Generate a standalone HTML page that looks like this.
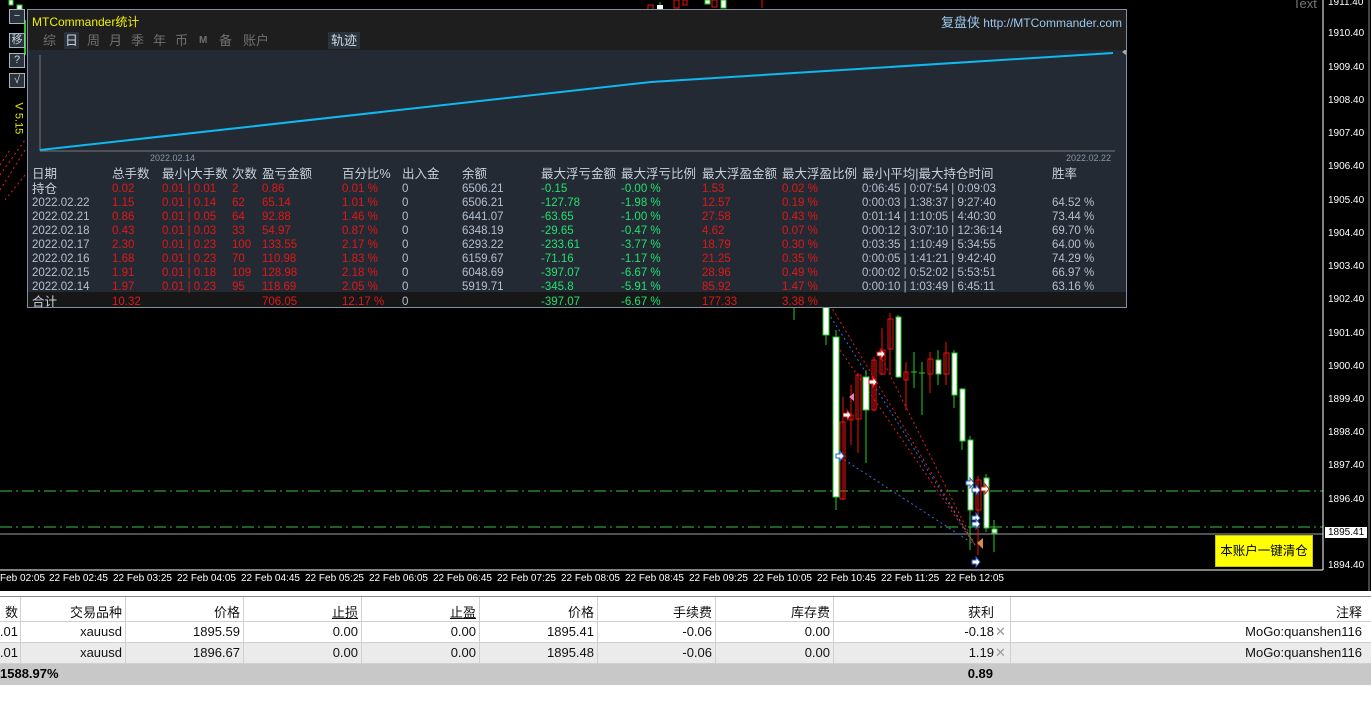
<!DOCTYPE html>
<html><head><meta charset="utf-8"><style>
*{margin:0;padding:0;box-sizing:border-box}
body{width:1371px;height:720px;overflow:hidden;background:#fff;font-family:"Liberation Sans","Noto Sans CJK SC",sans-serif;position:relative}
.abs{position:absolute;white-space:nowrap}
#chart{position:absolute;left:0;top:0;width:1371px;height:591px;background:#000}
.pl{position:absolute;left:1328px;font-size:10px;color:#fff;font-family:"Liberation Sans",sans-serif}
.tl{position:absolute;top:573px;font-size:10px;color:#fff}
.btn{position:absolute;left:9px;width:16px;height:15px;border:1px solid #a8b4c4;background:#2a323c;color:#c8d0dc;font-size:11px;text-align:center;line-height:13px}
#panel{position:absolute;left:27px;top:9px;width:1100px;height:299px;border:1px solid #7f8fa4;background:#232a33;overflow:hidden}
.r{position:absolute;font-size:11.5px;white-space:nowrap;line-height:14px}
.h{color:#c8d0dc;font-size:12.5px}
.w{color:#b4c0d0}.rd{color:#e01818}.g{color:#22e070}
.tab{position:absolute;top:22px;font-size:13px;color:#707070;line-height:17px}
#tbl{position:absolute;left:0;top:596px;width:1371px}
.row{position:absolute;left:0;width:1371px;font-size:13px;color:#111}
.c{position:absolute;text-align:right;white-space:nowrap}
.vl{position:absolute;width:1px;background:#d0d0d0}
</style></head><body>
<div id="chart">
<svg width="1371" height="591" style="position:absolute;left:0;top:0">
<line x1="0" y1="491" x2="1323" y2="491" stroke="#3bbf3b" stroke-dasharray="12,4,2,4"/>
<line x1="0" y1="527" x2="1323" y2="527" stroke="#3bbf3b" stroke-dasharray="12,4,2,4"/>
<line x1="0" y1="534" x2="1323" y2="534" stroke="#9aa0a8"/>
<line x1="1323" y1="0" x2="1323" y2="570" stroke="#fff"/>
<line x1="0" y1="570" x2="1323" y2="570" stroke="#fff"/>
<line x1="1369" y1="0" x2="1369" y2="591" stroke="#888"/>
<g stroke-dasharray="2,3" fill="none">
<line x1="830" y1="305" x2="975" y2="545" stroke="#e02020"/>
<line x1="840" y1="350" x2="975" y2="545" stroke="#e02020"/>
<line x1="880" y1="355" x2="975" y2="545" stroke="#e02020"/>
<line x1="820" y1="300" x2="975" y2="545" stroke="#3a6ae0"/>
<line x1="840" y1="457" x2="975" y2="545" stroke="#3a6ae0"/>
<line x1="0" y1="190" x2="25" y2="150" stroke="#e02020"/>
<line x1="0" y1="175" x2="25" y2="140" stroke="#e02020"/>
<line x1="5" y1="200" x2="25" y2="175" stroke="#e02020"/>
<line x1="0" y1="165" x2="10" y2="150" stroke="#e02020"/>
</g>
<g stroke-width="1">
<line x1="794" y1="305" x2="794" y2="320" stroke="#2c2"/>
<line x1="836" y1="330" x2="836" y2="510" stroke="#2c2"/><rect x="833" y="337" width="6" height="160" fill="#fff" stroke="#2c2"/>
<line x1="826" y1="305" x2="826" y2="345" stroke="#2c2"/><rect x="823" y="305" width="6" height="30" fill="#fff" stroke="#2c2"/>
<line x1="843" y1="397" x2="843" y2="500" stroke="#e11"/><rect x="840" y="422" width="5" height="77" fill="none" stroke="#e11"/>
<line x1="851" y1="385" x2="851" y2="445" stroke="#e11"/><rect x="849" y="415" width="4" height="5" fill="none" stroke="#e11"/>
<line x1="858" y1="373" x2="858" y2="453" stroke="#e11"/><rect x="856" y="375" width="5" height="44" fill="none" stroke="#e11"/>
<line x1="866" y1="370" x2="866" y2="463" stroke="#2c2"/><rect x="863" y="377" width="6" height="33" fill="#fff" stroke="#2c2"/>
<line x1="874" y1="357" x2="874" y2="411" stroke="#e11"/><rect x="872" y="360" width="4" height="50" fill="none" stroke="#e11"/>
<line x1="882" y1="328" x2="882" y2="375" stroke="#e11"/><rect x="880" y="350" width="5" height="24" fill="none" stroke="#e11"/>
<line x1="890" y1="313" x2="890" y2="375" stroke="#e11"/><rect x="888" y="319" width="5" height="30" fill="none" stroke="#e11"/>
<line x1="898" y1="315" x2="898" y2="378" stroke="#2c2"/><rect x="896" y="317" width="5" height="60" fill="#fff" stroke="#2c2"/>
<line x1="906" y1="362" x2="906" y2="410" stroke="#e11"/><rect x="904" y="372" width="4" height="8" fill="none" stroke="#e11"/>
<line x1="914" y1="352" x2="914" y2="388" stroke="#2c2"/><line x1="911" y1="372" x2="917" y2="372" stroke="#2c2"/>
<line x1="922" y1="362" x2="922" y2="415" stroke="#2c2"/><line x1="919" y1="373" x2="925" y2="373" stroke="#2c2"/>
<line x1="930" y1="352" x2="930" y2="393" stroke="#e11"/><rect x="928" y="359" width="5" height="15" fill="none" stroke="#e11"/>
<line x1="938" y1="350" x2="938" y2="385" stroke="#2c2"/><rect x="936" y="360" width="5" height="14" fill="#fff" stroke="#2c2"/>
<line x1="946" y1="342" x2="946" y2="385" stroke="#e11"/><rect x="944" y="353" width="5" height="21" fill="none" stroke="#e11"/>
<line x1="954" y1="350" x2="954" y2="408" stroke="#2c2"/><rect x="952" y="353" width="5" height="42" fill="#fff" stroke="#2c2"/>
<line x1="962" y1="388" x2="962" y2="450" stroke="#2c2"/><rect x="960" y="389" width="5" height="52" fill="#fff" stroke="#2c2"/>
<line x1="970" y1="436" x2="970" y2="550" stroke="#2c2"/><rect x="968" y="440" width="5" height="70" fill="#fff" stroke="#2c2"/>
<line x1="978" y1="476" x2="978" y2="555" stroke="#e11"/><rect x="976" y="480" width="5" height="30" fill="none" stroke="#e11"/>
<line x1="986" y1="474" x2="986" y2="532" stroke="#2c2"/><rect x="984" y="478" width="5" height="50" fill="#fff" stroke="#2c2"/>
<line x1="994" y1="520" x2="994" y2="552" stroke="#2c2"/><rect x="992" y="529" width="5" height="4" fill="#fff" stroke="#2c2"/>
<rect x="648" y="5" width="5" height="5" fill="none" stroke="#e11"/>
<line x1="660" y1="2" x2="660" y2="10" stroke="#2c2"/><rect x="657" y="5" width="6" height="4" fill="#fff"/>
<rect x="674" y="0" width="5" height="8" fill="none" stroke="#e11"/>
<rect x="683" y="0" width="4" height="5" fill="none" stroke="#e11"/>
<rect x="705" y="0" width="5" height="4" fill="#fff" stroke="#2c2"/>
<rect x="712" y="0" width="5" height="7" fill="none" stroke="#e11"/>
<rect x="721" y="0" width="5" height="8" fill="#fff" stroke="#2c2"/>
<line x1="762" y1="0" x2="762" y2="8" stroke="#e11"/>
<rect x="9" y="0" width="4" height="5" fill="#fff" stroke="#2c2"/>
<rect x="17" y="5" width="5" height="5" fill="#fff" stroke="#2c2"/>
<line x1="25" y1="20" x2="25" y2="55" stroke="#2c2" stroke-width="2"/>
<g fill="#fff" stroke="#2a5ad0"><path d="M836 454h4v-3l4 5-4 5v-3h-4z"/><path d="M966 481h4v-3l4 5-4 5v-3h-4z"/><path d="M972 488h4v-3l4 5-4 5v-3h-4z"/><path d="M972 516h4v-3l4 5-4 5v-3h-4z"/><path d="M972 522h4v-3l4 5-4 5v-3h-4z"/><path d="M972 560h4v-3l4 5-4 5v-3h-4z"/></g>
<g fill="#fff" stroke="#d01010"><path d="M843 413h4v-3l4 5-4 5v-3h-4z"/><path d="M869 380h4v-3l4 5-4 5v-3h-4z"/><path d="M877 352h4v-3l4 5-4 5v-3h-4z"/><path d="M981 487h4v-3l4 5-4 5v-3h-4z"/></g>
<path d="M854 393l-5 4 5 4z" fill="#e080c0"/><path d="M983 538l-6 5 6 6z" fill="#d09040"/>
</g>
</svg>
<div class="btn" style="top:9px">−</div>
<div class="btn" style="top:33px">移</div>
<div class="btn" style="top:53px">?</div>
<div class="btn" style="top:73px">√</div>
<div class="abs" style="left:1px;top:113px;width:34px;height:13px;line-height:13px;transform:rotate(90deg);font-size:11px;color:#e8e800">V 5.15</div>
<div class="abs" style="left:1293px;top:-4px;font-size:13px;color:#777">Text</div>
<div class="pl" style="top:-3px">1911.40</div><div class="pl" style="top:28px">1910.40</div><div class="pl" style="top:62px">1909.40</div><div class="pl" style="top:95px">1908.40</div><div class="pl" style="top:128px">1907.40</div><div class="pl" style="top:161px">1906.40</div><div class="pl" style="top:195px">1905.40</div><div class="pl" style="top:228px">1904.40</div><div class="pl" style="top:261px">1903.40</div><div class="pl" style="top:294px">1902.40</div><div class="pl" style="top:328px">1901.40</div><div class="pl" style="top:361px">1900.40</div><div class="pl" style="top:394px">1899.40</div><div class="pl" style="top:427px">1898.40</div><div class="pl" style="top:460px">1897.40</div><div class="pl" style="top:494px">1896.40</div>
<div class="pl" style="top:527px;left:1325px;background:#fff;color:#000;padding:0 3px;">1895.41</div>
<div class="pl" style="top:560px">1894.40</div>
<div class="abs" style="left:1215px;top:535px;width:98px;height:32px;background:#ffff00;border:1px solid #c8c800;font-size:12.5px;line-height:31px;text-align:center;color:#000">本账户一键清仓</div>
<div class="tl" style="left:0">Feb 02:05</div><div class="tl" style="left:49px">22 Feb 02:45</div><div class="tl" style="left:113px">22 Feb 03:25</div><div class="tl" style="left:177px">22 Feb 04:05</div><div class="tl" style="left:241px">22 Feb 04:45</div><div class="tl" style="left:305px">22 Feb 05:25</div><div class="tl" style="left:369px">22 Feb 06:05</div><div class="tl" style="left:433px">22 Feb 06:45</div><div class="tl" style="left:497px">22 Feb 07:25</div><div class="tl" style="left:561px">22 Feb 08:05</div><div class="tl" style="left:625px">22 Feb 08:45</div><div class="tl" style="left:689px">22 Feb 09:25</div><div class="tl" style="left:753px">22 Feb 10:05</div><div class="tl" style="left:817px">22 Feb 10:45</div><div class="tl" style="left:881px">22 Feb 11:25</div><div class="tl" style="left:945px">22 Feb 12:05</div>
</div>

<div id="panel">
<div class="abs" style="left:0;top:0;width:1098px;height:40px;background:#1e1e1e"></div>
<div class="abs" style="left:4px;top:3px;font-size:12px;color:#f0f000">MTCommander统计</div>
<div class="abs" style="right:4px;top:2px;font-size:12px;color:#9cc8f0"><span style="font-size:13px">复盘侠</span> http://MTCommander.com</div>
<div class="tab" style="left:15px">综</div>
<div class="tab" style="left:36px;background:#2a323c;color:#c8d0dc;padding:0 1px">日</div>
<div class="tab" style="left:59px">周</div><div class="tab" style="left:81px">月</div><div class="tab" style="left:103px">季</div><div class="tab" style="left:125px">年</div><div class="tab" style="left:147px">币</div>
<div class="tab" style="left:171px;font-size:10px;font-weight:bold">M</div>
<div class="tab" style="left:191px">备</div><div class="tab" style="left:215px">账户</div>
<div class="tab" style="left:300px;color:#d0d8e0;background:#2a323c;padding:0 3px">轨迹</div>
<svg width="1100" height="125" style="position:absolute;left:0;top:40px">
<line x1="12" y1="5" x2="12" y2="101" stroke="#777"/><line x1="12" y1="101" x2="1087" y2="101" stroke="#777"/>
<polyline points="12,100 623,32 1085,3" fill="none" stroke="#10b8f0" stroke-width="2"/>
<path d="M1098 -1l-4 3 4 3z" fill="#aaa"/>
</svg>
<div class="abs" style="left:122px;top:143px;font-size:9px;color:#8898a8">2022.02.14</div>
<div class="abs" style="left:1038px;top:143px;font-size:9px;color:#8898a8">2022.02.22</div>
<div class="abs" style="left:0;top:282px;width:1098px;height:18px;background:#171717"></div>
<div id="hdr"></div>
<div id="rows"></div>
</div>

<div id="tbl">
<div class="abs" style="left:0;top:0;width:1371px;height:1px;background:#888"></div>
<div class="row" style="top:1px;height:25px;border-bottom:1px solid #d0d0d0;background:#fff"></div>
<div class="row" style="top:26px;height:21px;border-bottom:1px solid #d0d0d0;background:#fff"></div>
<div class="row" style="top:47px;height:21px;border-bottom:1px solid #d0d0d0;background:#ebebeb"></div>
<div class="row" style="top:68px;height:21px;background:#c8c8c8"></div>
</div>
<script>
var xs=[4,84,134,204,234,314,374,434,513,593,674,754,834,1024];
var hd=["日期","总手数","最小|大手数","次数","盈亏金额","百分比%","出入金","余额","最大浮亏金额","最大浮亏比例","最大浮盈金额","最大浮盈比例","最小|平均|最大持仓时间","胜率"];
var hh="";hd.forEach(function(v,j){hh+='<div class="r h" style="left:'+xs[j]+'px;top:157px">'+v+'</div>';});
document.getElementById('hdr').innerHTML=hh;
var rows=[["持仓","0.02","0.01 | 0.01","2","0.86","0.01 %","0","6506.21","-0.15","-0.00 %","1.53","0.02 %","0:06:45 | 0:07:54 | 0:09:03",""],
["2022.02.22","1.15","0.01 | 0.14","62","65.14","1.01 %","0","6506.21","-127.78","-1.98 %","12.57","0.19 %","0:00:03 | 1:38:37 | 9:27:40","64.52 %"],
["2022.02.21","0.86","0.01 | 0.05","64","92.88","1.46 %","0","6441.07","-63.65","-1.00 %","27.58","0.43 %","0:01:14 | 1:10:05 | 4:40:30","73.44 %"],
["2022.02.18","0.43","0.01 | 0.03","33","54.97","0.87 %","0","6348.19","-29.65","-0.47 %","4.62","0.07 %","0:00:12 | 3:07:10 | 12:36:14","69.70 %"],
["2022.02.17","2.30","0.01 | 0.23","100","133.55","2.17 %","0","6293.22","-233.61","-3.77 %","18.79","0.30 %","0:03:35 | 1:10:49 | 5:34:55","64.00 %"],
["2022.02.16","1.68","0.01 | 0.23","70","110.98","1.83 %","0","6159.67","-71.16","-1.17 %","21.25","0.35 %","0:00:05 | 1:41:21 | 9:42:40","74.29 %"],
["2022.02.15","1.91","0.01 | 0.18","109","128.98","2.18 %","0","6048.69","-397.07","-6.67 %","28.96","0.49 %","0:00:02 | 0:52:02 | 5:53:51","66.97 %"],
["2022.02.14","1.97","0.01 | 0.23","95","118.69","2.05 %","0","5919.71","-345.8","-5.91 %","85.92","1.47 %","0:00:10 | 1:03:49 | 6:45:11","63.16 %"],
["合计","10.32","","","706.05","12.17 %","0","","-397.07","-6.67 %","177.33","3.38 %","",""]];
var cl=["w","rd","rd","rd","rd","rd","w","w","g","g","rd","rd","w","w"];
var h="";
rows.forEach(function(r,i){var y=i==0?172:(i==8?285:172+14*i);r.forEach(function(v,j){var c=cl[j];if(j==0&&(i==0||i==8)){c="h";}h+='<div class="r '+c+'" style="left:'+xs[j]+'px;top:'+y+'px">'+v+'</div>';});});
document.getElementById('rows').innerHTML=h;
var ends=[18,122,240,358,476,594,712,830,994,1362];
var bounds=[20,125,243,361,479,597,715,833,1010];
var data=[["数","交易品种","价格","<u>止损</u>","<u>止盈</u>","价格","手续费","库存费","获利","注释"],
[".01","xauusd","1895.59","0.00","0.00","1895.41","-0.06","0.00","-0.18","MoGo:quanshen116"],
[".01","xauusd","1896.67","0.00","0.00","1895.48","-0.06","0.00","1.19","MoGo:quanshen116"]];
var t="",tops=[6,28,49];
data.forEach(function(r,i){r.forEach(function(v,j){t+='<div class="c" style="font-size:13px;color:#111;right:'+(1371-ends[j])+'px;top:'+tops[i]+'px">'+v+'</div>';});
if(i>0)t+='<div class="c" style="left:995px;top:'+tops[i]+'px;color:#999;font-size:13px">✕</div>';});
bounds.forEach(function(b){t+='<div class="vl" style="left:'+b+'px;top:1px;height:67px"></div>';});
t+='<div class="c" style="left:0;top:70px;font-weight:bold;font-size:13px">1588.97%</div><div class="c" style="right:378px;top:70px;font-weight:bold;font-size:13px">0.89</div>';
document.getElementById('tbl').insertAdjacentHTML('beforeend',t);
</script>
</body></html>
